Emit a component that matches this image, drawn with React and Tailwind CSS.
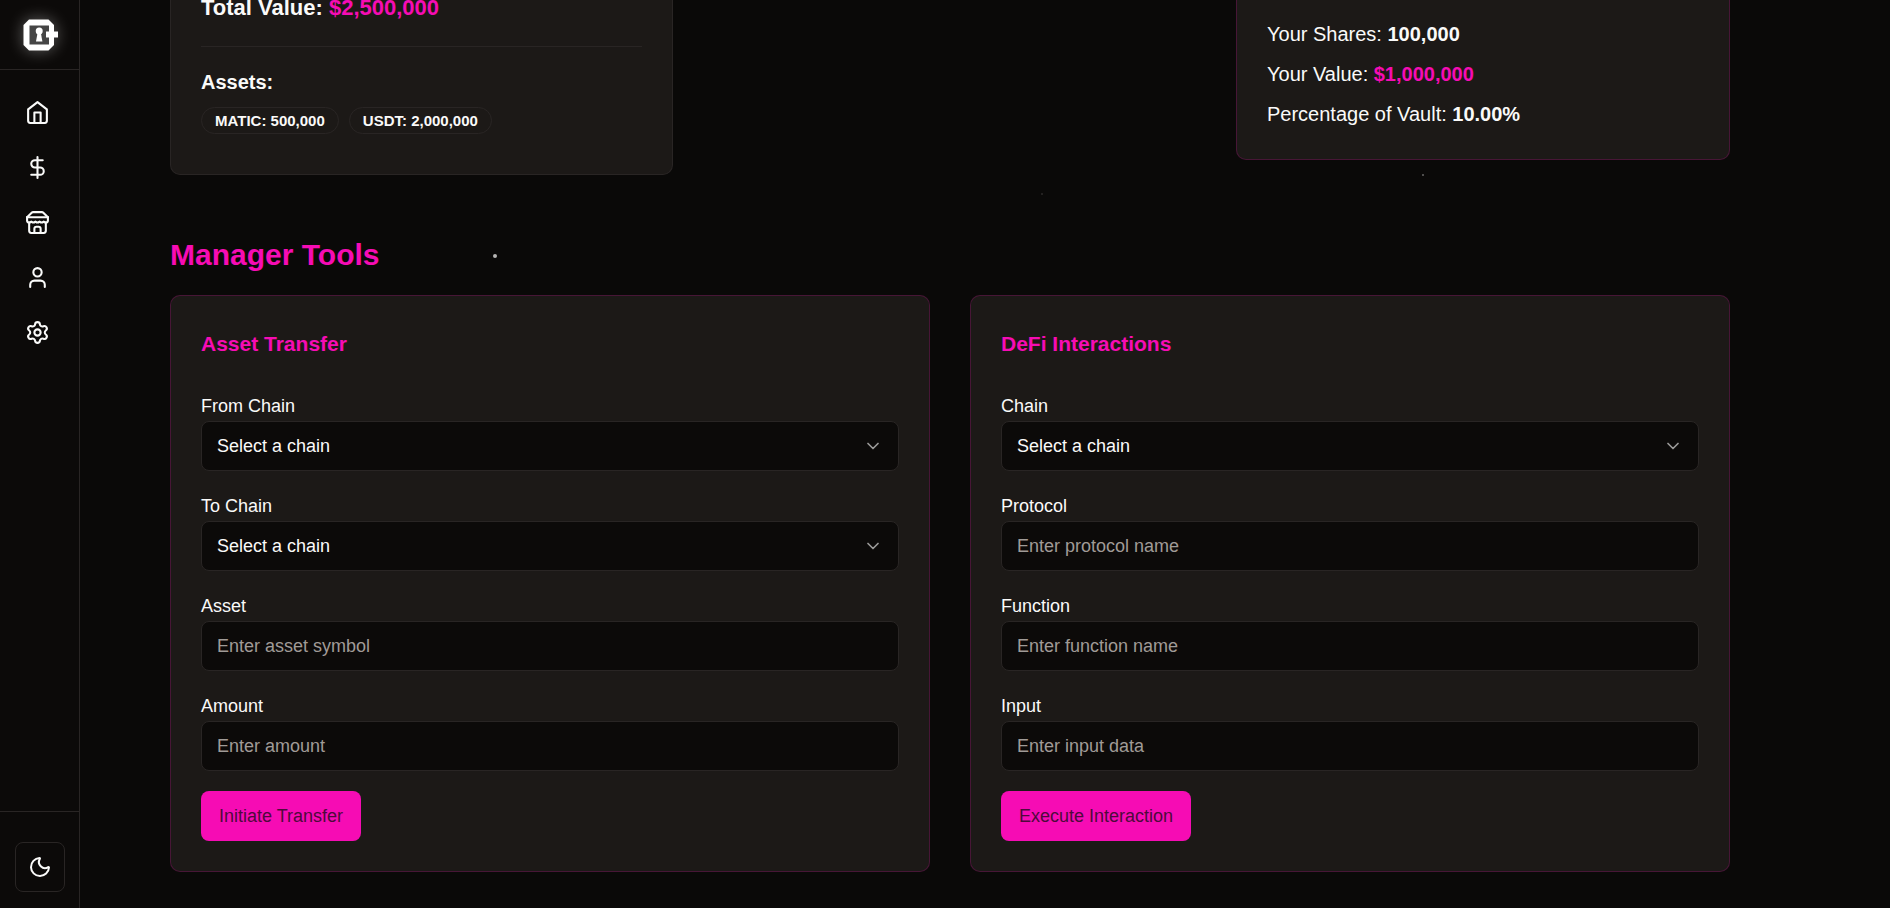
import React, { useState } from "react";
import { ChevronDown, DollarSign, Moon, Settings, User } from "lucide-react";

const chains = ["Ethereum", "Polygon", "Arbitrum", "Optimism"];

const assets = [
  { symbol: "MATIC", amount: "500,000" },
  { symbol: "USDT", amount: "2,000,000" },
];

const transferFields = [
  { id: "fromChain", label: "From Chain", type: "select" },
  { id: "toChain", label: "To Chain", type: "select" },
  { id: "asset", label: "Asset", placeholder: "Enter asset symbol" },
  { id: "amount", label: "Amount", placeholder: "Enter amount" },
];

const defiFields = [
  { id: "chain", label: "Chain", type: "select" },
  { id: "protocol", label: "Protocol", placeholder: "Enter protocol name" },
  { id: "function", label: "Function", placeholder: "Enter function name" },
  { id: "input", label: "Input", placeholder: "Enter input data" },
];

const Logo = () => (
  <svg
    viewBox="0 0 36 32"
    className="h-8 w-9 drop-shadow-[0_0_8px_rgba(255,255,255,0.35)]"
    aria-hidden="true"
  >
    <path d="M7 0.5H26.500L32 6V26L26.500 31.500H7L1.500 26V6Z" fill="#fff" />
    <path d="M7.500 6.500H27V25.500H7.500Z" fill="#454545" />
    <path d="M24 12.500H36V18.500H24Z" fill="#fff" />
    <circle cx="17.200" cy="12" r="3.500" fill="#fff" />
    <path d="M15.700 13H18.700L20.400 22.500H14Z" fill="#fff" />
  </svg>
);

const HomeIcon = ({ className }) => (
  <svg viewBox="0 0 24 24" fill="none" stroke="currentColor" strokeWidth="2" strokeLinecap="round" strokeLinejoin="round" className={className}>
    <path d="m3 9 9-7 9 7v11a2 2 0 0 1-2 2H5a2 2 0 0 1-2-2z" />
    <polyline points="9 22 9 12 15 12 15 22" />
  </svg>
);

const StoreIcon = ({ className }) => (
  <svg viewBox="0 0 24 24" fill="none" stroke="currentColor" strokeWidth="2" strokeLinecap="round" strokeLinejoin="round" className={className}>
    <path d="m2 7 4.41-4.41A2 2 0 0 1 7.83 2h8.34a2 2 0 0 1 1.42.59L22 7" />
    <path d="M4 12v8a2 2 0 0 0 2 2h12a2 2 0 0 0 2-2v-8" />
    <path d="M15 22v-4a2 2 0 0 0-2-2h-2a2 2 0 0 0-2 2v4" />
    <path d="M2 7h20" />
    <path d="M22 7v3a2 2 0 0 1-2 2a2.7 2.7 0 0 1-1.59-.63.7.7 0 0 0-.82 0A2.7 2.7 0 0 1 16 12a2.7 2.7 0 0 1-1.59-.63.7.7 0 0 0-.82 0A2.7 2.7 0 0 1 12 12a2.7 2.7 0 0 1-1.59-.63.7.7 0 0 0-.82 0A2.7 2.7 0 0 1 8 12a2.7 2.7 0 0 1-1.59-.63.7.7 0 0 0-.82 0A2.7 2.7 0 0 1 4 12a2 2 0 0 1-2-2V7" />
  </svg>
);

const navItems = [
  { name: "Home", icon: HomeIcon },
  { name: "Invest", icon: DollarSign },
  { name: "Marketplace", icon: StoreIcon },
  { name: "Profile", icon: User },
  { name: "Settings", icon: Settings },
];

const Sidebar = () => (
  <aside className="fixed inset-y-0 left-0 z-10 flex w-20 flex-col border-r border-[#292524] bg-[#0c0a09]">
    <div className="flex h-[70px] items-center justify-center border-b border-[#292524]">
      <a href="#" aria-label="Vault home">
        <Logo />
      </a>
    </div>
    <nav className="flex flex-1 flex-col gap-[30px] pt-[30px] pl-[25px]">
      {navItems.map(({ name, icon: Icon }) => (
        <a key={name} href="#" aria-label={name} className="w-fit">
          <Icon className="h-[25px] w-[25px]" />
        </a>
      ))}
    </nav>
    <div className="flex justify-center border-t border-[#292524] pt-[30px] pb-4">
      <button
        type="button"
        aria-label="Toggle theme"
        className="flex h-[50px] w-[50px] items-center justify-center rounded-lg border border-[#292524]"
      >
        <Moon className="h-6 w-6" />
      </button>
    </div>
  </aside>
);

const Field = ({ id, label, type, placeholder }) => {
  const [value, setValue] = useState("");
  return (
    <div>
      <label htmlFor={id} className="block w-fit text-[18px] leading-[30px]">
        {label}
      </label>
      {type === "select" ? (
        <div className="relative">
          <select
            id={id}
            value={value}
            onChange={(e) => setValue(e.target.value)}
            className="block h-[50px] w-full appearance-none rounded-lg border border-[#292524] bg-[#0c0a09] px-[15px] text-[18px]"
          >
            <option value="">Select a chain</option>
            {chains.map((chain) => (
              <option key={chain}>{chain}</option>
            ))}
          </select>
          <ChevronDown className="pointer-events-none absolute top-[15px] right-4 h-5 w-5 opacity-60" />
        </div>
      ) : (
        <input
          id={id}
          type="text"
          value={value}
          onChange={(e) => setValue(e.target.value)}
          placeholder={placeholder}
          className="block h-[50px] w-full rounded-lg border border-[#292524] bg-[#0c0a09] px-[15px] text-[18px] placeholder:text-[#a09b97]"
        />
      )}
    </div>
  );
};

const ToolCard = ({ title, fields, action }) => (
  <section className="rounded-[10px] border border-[#f60cb4]/20 bg-[#1c1917] p-[30px]">
    <h3 className="mb-[30px] text-[21px] leading-[35px] font-semibold text-[#f60cb4]">{title}</h3>
    <form className="flex flex-col gap-5" onSubmit={(e) => e.preventDefault()}>
      {fields.map((field) => (
        <Field key={field.id} {...field} />
      ))}
      <button type="submit" className="h-[50px] w-fit rounded-lg bg-[#f60cb4] px-[18px] text-[18px] text-[#4d0a3b]">
        {action}
      </button>
    </form>
  </section>
);

const App = () => {
  return (
    <div className="min-h-screen overflow-hidden bg-[#0a0908] font-['Liberation_Sans',Arial,sans-serif] text-[#fafaf9]">
      <Sidebar />

      {/* Star background */}
      <div className="pointer-events-none absolute inset-0" aria-hidden="true">
        <span className="absolute top-[254px] left-[493px] h-1 w-1 rounded-full bg-[#b5b4b3]" />
        <span className="absolute top-[174px] left-[1422px] h-0.5 w-0.5 rounded-full bg-[#666463]" />
        <span className="absolute top-[193px] left-[1041px] h-0.5 w-0.5 rounded-full bg-[#2c2a29]" />
      </div>

      <main className="pb-9 pl-[170px] pr-40">
        {/* Vault summary */}
        <div className="grid grid-cols-[503fr_563fr_494fr] items-start">
          <section className="rounded-b-[10px] border border-t-0 border-[#292524] bg-[#1c1917] px-[30px] pb-10">
            <p className="pb-[30px] text-[22px] leading-4 font-semibold">
              Total Value: <span className="text-[#f60cb4]">$2,500,000</span>
            </p>
            <hr className="border-[#292524]" />
            <h4 className="pt-5 text-[20px] leading-[30px] font-semibold">Assets:</h4>
            <ul className="mt-2.5 flex flex-wrap gap-2.5">
              {assets.map((asset) => (
                <li
                  key={asset.symbol}
                  className="rounded-full border border-[#292524] px-[13px] text-[15px] leading-[25px] font-semibold"
                >
                  {asset.symbol}: {asset.amount}
                </li>
              ))}
            </ul>
          </section>

          <section className="col-start-3 flex flex-col gap-2.5 rounded-b-[10px] border border-t-0 border-[#f60cb4]/20 bg-[#1c1917] px-[30px] pt-[19px] pb-[30px] text-[20px] leading-[30px]">
            <p>
              Your Shares: <strong>100,000</strong>
            </p>
            <p>
              Your Value: <strong className="text-[#f60cb4]">$1,000,000</strong>
            </p>
            <p>
              Percentage of Vault: <strong>10.00%</strong>
            </p>
          </section>
        </div>

        {/* Manager tools */}
        <h2 className="mt-[60px] mb-5 text-[30px] leading-10 font-semibold text-[#f60cb4]">Manager Tools</h2>
        <div className="grid grid-cols-2 gap-10">
          <ToolCard title="Asset Transfer" fields={transferFields} action="Initiate Transfer" />
          <ToolCard title="DeFi Interactions" fields={defiFields} action="Execute Interaction" />
        </div>
      </main>
    </div>
  );
};

export default App;
